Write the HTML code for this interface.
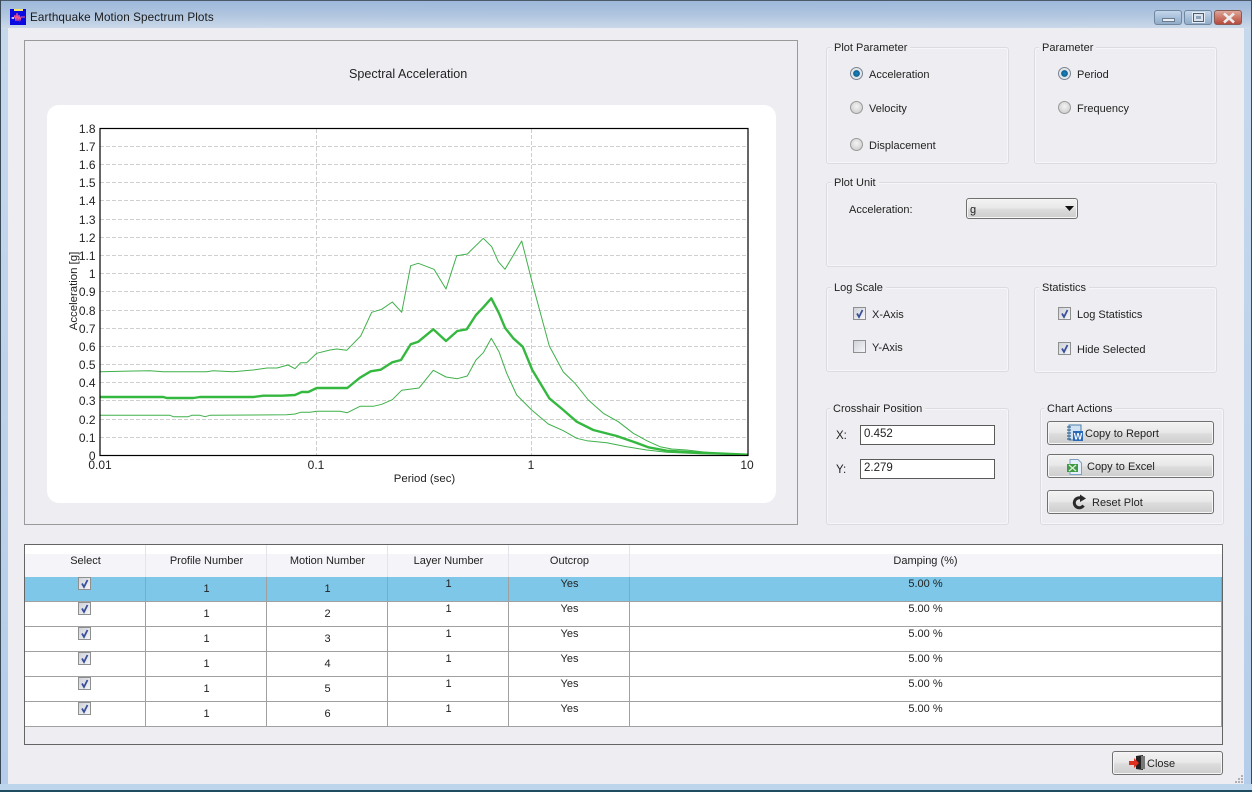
<!DOCTYPE html>
<html><head><meta charset="utf-8"><title>Earthquake Motion Spectrum Plots</title>
<style>
html,body{margin:0;padding:0;background:#b8d0ea}
#w{position:relative;width:1252px;height:792px;overflow:hidden;font-family:"Liberation Sans",sans-serif;font-size:11px;color:#222;background:#bad3ec}
#w div,#w span.a{position:absolute;box-sizing:border-box}
.t{position:absolute;white-space:nowrap;line-height:14px;margin-top:1px}
.g{border:1px solid #dcdce0;border-radius:3px;box-shadow:0 0 0 1px #f6f6f8 inset}
.lg{position:absolute;background:#eeeef2;padding:0 3px 0 3px;line-height:14px;white-space:nowrap;top:-7px;left:4px}
.r{width:13px;height:13px;border-radius:50%;border:1px solid #9a9a9a;background:radial-gradient(circle at 50% 40%,#f4f4f4,#d8d8d8 60%,#c4c4c4)}
.r.on{background:radial-gradient(circle,#1a86bc 0,#0d5f92 40%,#dfe4ea 46%,#e6e6e6 70%,#cfcfcf);border-color:#7a8492}
.c{width:13px;height:13px;border:1px solid #8e8f8f;background:linear-gradient(135deg,#cfd2d9,#f6f6f8);}
.c svg{position:absolute;left:0;top:0}
.b{border:1px solid #707070;border-radius:3px;background:linear-gradient(#f3f3f3 0,#e9e9e9 45%,#dcdcdc 55%,#cdcdcd 100%);box-shadow:inset 0 0 0 1px #f6f6f6}
.tb{background:#fff;border:1px solid #5a5a5a}
.h{position:absolute;left:25px;width:1196px;height:1px;background:#a0a0a0}
.ctr{text-align:center;width:121px}
</style></head><body>
<div id="w">
<!-- title bar -->
<div style="left:0;top:0;width:1252px;height:29px;background:linear-gradient(90deg,#a9c1de 0,#a4bcda 50%,#a8c0dc 100%)"></div>
<div style="left:0;top:0;width:1252px;height:29px;background:linear-gradient(#9ab6da 0,#b4c8e0 55%,#d3dfec 100%);opacity:.85"></div>
<div style="left:0;top:0;width:1252px;height:1px;background:#4a5a68"></div>
<div style="left:0;top:0;width:1px;height:792px;background:#3c4a58"></div>
<div style="left:1251px;top:0;width:1px;height:792px;background:#3c4a58"></div>
<div style="left:1px;top:29px;width:7px;height:755px;background:linear-gradient(#c6d8ec,#b4cdea)"></div>
<div style="left:1244px;top:29px;width:7px;height:755px;background:linear-gradient(#c6d8ec,#b4cdea)"></div>
<div style="left:0;top:784px;width:1252px;height:7px;background:#bcd5ea"></div>
<div style="left:0;top:790px;width:1252px;height:2px;background:#1f4c60"></div>
<!-- client -->
<div style="left:8px;top:28px;width:1236px;height:756px;background:#eeeef2"></div>
<!-- app icon -->
<svg style="position:absolute;left:10px;top:9px" width="16" height="16" viewBox="0 0 16 16"><rect width="16" height="16" fill="#0a0ae0"/><rect x="4" y="0" width="9" height="2" fill="#f4e66a"/><path d="M1 9H4L5 6 6 12 7 4 8 12 9 6 10 11 11 8H15" stroke="#ff5a8a" stroke-width="1" fill="none"/><path d="M2 9H4" stroke="#fff" stroke-width="1.5"/></svg>
<span class="t" style="left:30px;top:10px;font-size:11.7px;color:#1b1b1b;letter-spacing:.1px">Earthquake Motion Spectrum Plots</span>
<!-- window buttons -->
<div style="left:1154px;top:10px;width:28px;height:15px;border:1px solid #6f879f;border-radius:3px;background:linear-gradient(#c4d6ea,#a8c0da 50%,#92acc8)"><div style="left:7px;top:7px;width:13px;height:4px;background:#e8edf3;border:1px solid #6a7c90"></div></div>
<div style="left:1184px;top:10px;width:28px;height:15px;border:1px solid #6f879f;border-radius:3px;background:linear-gradient(#c4d6ea,#a8c0da 50%,#92acc8)"><div style="left:8px;top:2px;width:11px;height:9px;border:1px solid #4c5d70;background:#dbe4ee;box-shadow:0 0 0 1px #e6edf4"><div style="left:2px;top:2px;width:5px;height:3px;background:#8fa4ba"></div></div></div>
<div style="left:1214px;top:10px;width:28px;height:15px;border:1px solid #8a5a54;border-radius:3px;background:linear-gradient(#dca699,#cc7668 50%,#b44a3e)"><svg style="position:absolute;left:6px;top:1px" width="16" height="12" viewBox="0 0 16 12"><path d="M3 1.5 13 10.5M13 1.5 3 10.5" stroke="#ececec" stroke-width="2.6"/></svg></div>

<!-- chart panel -->
<div style="left:24px;top:40px;width:774px;height:485px;border:1px solid #9a9a9a;background:#eeeef2"></div>
<div style="left:47px;top:105px;width:729px;height:398px;background:#fff;border-radius:12px"></div>
<span class="t" style="left:349px;top:66px;font-size:12.6px;color:#222">Spectral Acceleration</span>
<svg style="position:absolute;left:0;top:0" width="800" height="530" viewBox="0 0 800 530" font-family="Liberation Sans, sans-serif" font-size="12" fill="#222">
<g stroke="#cfcfcf" stroke-dasharray="4 2" stroke-width="1" fill="none">
<path d="M100 146.5H748M100 164.5H748M100 182.5H748M100 200.5H748M100 219.5H748M100 237.5H748M100 255.5H748M100 273.5H748M100 291.5H748M100 310.5H748M100 328.5H748M100 346.5H748M100 364.5H748M100 382.5H748M100 400.5H748M100 419.5H748M100 437.5H748"/>
<path d="M316.5 129V455M531.5 129V455"/>
</g>
<g fill="none" stroke="#3fb04a" stroke-width="1" stroke-linejoin="round">
<polyline points="100.3,371.7 150,370.7 163.3,371.7 206.7,371.7 213,370.7 233,371.7 253,370 267,368 277,368 288,365 295,368.7 300.7,362.7 306.7,362.7 316.7,353.3 330,350 336.7,349 346.7,350.3 360.7,336 371.7,312.3 381.7,309.3 392.3,302 401.7,312.3 410.7,265.7 418.3,263.3 434,269.3 446,289 456.7,255.7 467.3,254 483.3,238.3 491.7,246.7 498.3,261.7 505,269.3 521.7,241 533.3,286.7 549.3,346 563.3,372 575,383.3 588.3,400 603.3,413.3 618.3,421.7 633.3,433.3 646.7,440.7 660,446.7 671.7,449 686.7,450 710,452.7 747.7,454.3"/>
<polyline points="100.3,415.3 170,415.3 173.3,416.7 188.3,416.7 191.7,415.3 200,415.3 205,416.7 210,415.3 286.7,414.7 295,414 300.7,412.3 310,412.3 316.7,411.3 340,411.3 347.3,412.7 360,406.3 373.3,406.3 381.7,404.3 392.3,399.7 401.7,390.3 419,388 433.3,370.3 446,377 457.3,378.7 467.3,376 476,360 483.3,352.7 491.3,338.3 499,351.7 506.7,373.3 516.7,395 531.7,410 548.3,424 563.3,430.7 576.7,438.3 586.7,440.7 606.7,442.7 626.7,446.7 646.7,450 666.7,452.3 700,453.7 747.7,454.7"/>
</g>
<polyline fill="none" stroke="#35b83f" stroke-width="2.4" stroke-linejoin="round" points="100.3,397 163.3,397 166.7,398 193.3,398 200,397 253.3,397 263.3,395.7 281.7,395.7 295,395 301.7,392 308.3,392 316.7,388 347.3,388 360,377.7 370.7,371.3 380.7,369.7 392.3,362.3 401,360 410.7,344.3 418.3,341.7 433.3,329.3 446,341 457.3,331 466.7,329.3 476,315 483.3,307.3 491.3,298.3 499,313.3 505,327.7 513.3,338.3 522.7,346.7 532.3,370 549.3,398.3 563.3,410 576.7,421.7 593.3,430 616.7,436 633.3,441.7 648.3,447.3 666.7,450.7 693.3,452.3 747.7,454.7"/>
<rect x="100" y="128.5" width="648" height="327" fill="none" stroke="#000" stroke-width="1.2"/>
<g text-anchor="end">
<text x="95.5" y="133">1.8</text><text x="95.5" y="151">1.7</text><text x="95.5" y="169">1.6</text><text x="95.5" y="187">1.5</text><text x="95.5" y="205">1.4</text><text x="95.5" y="224">1.3</text><text x="95.5" y="242">1.2</text><text x="95.5" y="260">1.1</text><text x="95.5" y="278">1</text><text x="95.5" y="296">0.9</text><text x="95.5" y="315">0.8</text><text x="95.5" y="333">0.7</text><text x="95.5" y="351">0.6</text><text x="95.5" y="369">0.5</text><text x="95.5" y="387">0.4</text><text x="95.5" y="405">0.3</text><text x="95.5" y="424">0.2</text><text x="95.5" y="442">0.1</text><text x="95.5" y="460">0</text>
</g>
<g text-anchor="middle">
<text x="100" y="469">0.01</text><text x="316" y="469">0.1</text><text x="531" y="469">1</text><text x="747" y="469">10</text>
<text x="424.5" y="482" font-size="11.4">Period (sec)</text>
</g>
<text transform="translate(77,291) rotate(-90)" text-anchor="middle" font-size="11.4">Acceleration [g]</text>
</svg>

<!-- Plot Parameter -->
<div class="g" style="left:826px;top:47px;width:183px;height:117px"><span class="lg">Plot Parameter</span></div>
<div class="r on" style="left:850px;top:67px"></div><span class="t" style="left:869px;top:67px">Acceleration</span>
<div class="r" style="left:850px;top:101px"></div><span class="t" style="left:869px;top:101px">Velocity</span>
<div class="r" style="left:850px;top:138px"></div><span class="t" style="left:869px;top:138px">Displacement</span>
<!-- Parameter -->
<div class="g" style="left:1034px;top:47px;width:183px;height:117px"><span class="lg">Parameter</span></div>
<div class="r on" style="left:1058px;top:67px"></div><span class="t" style="left:1077px;top:67px">Period</span>
<div class="r" style="left:1058px;top:101px"></div><span class="t" style="left:1077px;top:101px">Frequency</span>
<!-- Plot Unit -->
<div class="g" style="left:826px;top:182px;width:391px;height:85px"><span class="lg">Plot Unit</span></div>
<span class="t" style="left:849px;top:202px">Acceleration:</span>
<div class="b" style="left:966px;top:198px;width:112px;height:21px"></div>
<span class="t" style="left:970px;top:202px">g</span>
<svg style="position:absolute;left:1065px;top:206px" width="10" height="6"><path d="M0 0H9L4.5 5Z" fill="#111"/></svg>
<!-- Log Scale -->
<div class="g" style="left:826px;top:287px;width:183px;height:85px"><span class="lg">Log Scale</span></div>
<div class="c" style="left:853px;top:307px"><svg width="11" height="11"><path d="M3 5.5 5 9 8.5 2" stroke="#3a4f9a" stroke-width="1.8" fill="none"/></svg></div><span class="t" style="left:872px;top:307px">X-Axis</span>
<div class="c" style="left:853px;top:340px"></div><span class="t" style="left:872px;top:340px">Y-Axis</span>
<!-- Statistics -->
<div class="g" style="left:1034px;top:287px;width:183px;height:86px"><span class="lg">Statistics</span></div>
<div class="c" style="left:1058px;top:307px"><svg width="11" height="11"><path d="M3 5.5 5 9 8.5 2" stroke="#3a4f9a" stroke-width="1.8" fill="none"/></svg></div><span class="t" style="left:1077px;top:307px">Log Statistics</span>
<div class="c" style="left:1058px;top:342px"><svg width="11" height="11"><path d="M3 5.5 5 9 8.5 2" stroke="#3a4f9a" stroke-width="1.8" fill="none"/></svg></div><span class="t" style="left:1077px;top:342px">Hide Selected</span>
<!-- Crosshair -->
<div class="g" style="left:826px;top:408px;width:183px;height:117px"><span class="lg" style="left:3px">Crosshair Position</span></div>
<span class="t" style="left:836px;top:428px;font-size:11.5px">X:</span>
<div class="tb" style="left:860px;top:425px;width:135px;height:20px"></div><span class="t" style="left:864px;top:426px;font-size:11.5px">0.452</span>
<span class="t" style="left:836px;top:462px;font-size:11.5px">Y:</span>
<div class="tb" style="left:860px;top:459px;width:135px;height:20px"></div><span class="t" style="left:864px;top:460px;font-size:11.5px">2.279</span>
<!-- Chart Actions -->
<div class="g" style="left:1040px;top:408px;width:184px;height:117px"><span class="lg" style="left:3px">Chart Actions</span></div>
<div class="b" style="left:1047px;top:421px;width:167px;height:24px"></div>
<svg style="position:absolute;left:1066px;top:424px" width="18" height="18" viewBox="0 0 18 18"><rect x="3" y="1" width="12" height="15" fill="#cfe2f3" stroke="#4b7ea8"/><path d="M1 3H5M1 6H5M1 9H5M1 12H5M1 15H5" stroke="#3a6a94" stroke-width="1.2"/><rect x="7" y="7" width="10" height="10" fill="#2a6ab8"/><text x="12" y="15.5" font-size="9" font-weight="bold" fill="#fff" text-anchor="middle" font-family="Liberation Sans">W</text></svg>
<span class="t" style="left:1085px;top:426px">Copy to Report</span>
<div class="b" style="left:1047px;top:454px;width:167px;height:24px"></div>
<svg style="position:absolute;left:1067px;top:459px" width="16" height="16" viewBox="0 0 16 16"><path d="M3 .5H11L14.5 4V15.5H3Z" fill="#e6f0fa" stroke="#7c9fc4"/><path d="M0 5H11V13H0Z" fill="#3f9a44"/><path d="M2 6 9 12M9 6 2 12" stroke="#d8ecd8" stroke-width="1.4"/></svg>
<span class="t" style="left:1087px;top:459px">Copy to Excel</span>
<div class="b" style="left:1047px;top:490px;width:167px;height:24px"></div>
<svg style="position:absolute;left:1072px;top:494px" width="15" height="16" viewBox="0 0 15 16"><path d="M11.5 11.5A5 5 0 1 1 9.5 4.3" stroke="#2a2a2a" stroke-width="3" fill="none"/><path d="M8 0.5 14 4.5 8 8Z" fill="#2a2a2a"/></svg>
<span class="t" style="left:1092px;top:495px">Reset Plot</span>

<!-- Grid -->
<div style="left:24px;top:544px;width:1199px;height:201px;border:1px solid #646464;background:#eeeef2"></div>
<div style="left:25px;top:545px;width:1197px;height:9px;background:#fff"></div>
<div style="left:25px;top:554px;width:1197px;height:23px;background:#f4f4f9"></div>
<div style="left:25px;top:577px;width:1197px;height:150px;background:#fff"></div>
<div style="left:25px;top:577px;width:1197px;height:24px;background:#7fc7e8"></div>
<div style="left:1221px;top:577px;width:1px;height:150px;background:#a0a0a0"></div>
<div style="left:145px;top:545px;width:1px;height:32px;background:#e4e4ea"></div><div style="left:266px;top:545px;width:1px;height:32px;background:#e4e4ea"></div><div style="left:387px;top:545px;width:1px;height:32px;background:#e4e4ea"></div><div style="left:508px;top:545px;width:1px;height:32px;background:#e4e4ea"></div><div style="left:629px;top:545px;width:1px;height:32px;background:#e4e4ea"></div>
<div style="left:145px;top:577px;width:1px;height:150px;background:#a0a0a0"></div><div style="left:266px;top:577px;width:1px;height:150px;background:#a0a0a0"></div><div style="left:387px;top:577px;width:1px;height:150px;background:#a0a0a0"></div><div style="left:508px;top:577px;width:1px;height:150px;background:#a0a0a0"></div><div style="left:629px;top:577px;width:1px;height:150px;background:#a0a0a0"></div>
<div class="h" style="top:601px"></div><div class="h" style="top:626px"></div><div class="h" style="top:651px"></div><div class="h" style="top:676px"></div><div class="h" style="top:701px"></div><div class="h" style="top:726px"></div>
<span class="t ctr" style="left:25px;top:553px">Select</span><span class="t ctr" style="left:146px;top:553px">Profile Number</span><span class="t ctr" style="left:267px;top:553px">Motion Number</span><span class="t ctr" style="left:388px;top:553px">Layer Number</span><span class="t ctr" style="left:509px;top:553px">Outcrop</span><span class="t" style="left:630px;top:553px;width:591px;text-align:center">Damping (%)</span>

<div class="c" style="left:78px;top:577px"><svg width="11" height="11"><path d="M3 5.5 5 9 8.5 2" stroke="#3a4f9a" stroke-width="1.8" fill="none"/></svg></div>
<span class="t ctr" style="left:146px;top:581px">1</span><span class="t ctr" style="left:267px;top:581px">1</span><span class="t ctr" style="left:388px;top:576px">1</span><span class="t ctr" style="left:509px;top:576px">Yes</span><span class="t" style="left:630px;top:576px;width:591px;text-align:center">5.00 %</span>
<div class="c" style="left:78px;top:602px"><svg width="11" height="11"><path d="M3 5.5 5 9 8.5 2" stroke="#3a4f9a" stroke-width="1.8" fill="none"/></svg></div>
<span class="t ctr" style="left:146px;top:606px">1</span><span class="t ctr" style="left:267px;top:606px">2</span><span class="t ctr" style="left:388px;top:601px">1</span><span class="t ctr" style="left:509px;top:601px">Yes</span><span class="t" style="left:630px;top:601px;width:591px;text-align:center">5.00 %</span>
<div class="c" style="left:78px;top:627px"><svg width="11" height="11"><path d="M3 5.5 5 9 8.5 2" stroke="#3a4f9a" stroke-width="1.8" fill="none"/></svg></div>
<span class="t ctr" style="left:146px;top:631px">1</span><span class="t ctr" style="left:267px;top:631px">3</span><span class="t ctr" style="left:388px;top:626px">1</span><span class="t ctr" style="left:509px;top:626px">Yes</span><span class="t" style="left:630px;top:626px;width:591px;text-align:center">5.00 %</span>
<div class="c" style="left:78px;top:652px"><svg width="11" height="11"><path d="M3 5.5 5 9 8.5 2" stroke="#3a4f9a" stroke-width="1.8" fill="none"/></svg></div>
<span class="t ctr" style="left:146px;top:656px">1</span><span class="t ctr" style="left:267px;top:656px">4</span><span class="t ctr" style="left:388px;top:651px">1</span><span class="t ctr" style="left:509px;top:651px">Yes</span><span class="t" style="left:630px;top:651px;width:591px;text-align:center">5.00 %</span>
<div class="c" style="left:78px;top:677px"><svg width="11" height="11"><path d="M3 5.5 5 9 8.5 2" stroke="#3a4f9a" stroke-width="1.8" fill="none"/></svg></div>
<span class="t ctr" style="left:146px;top:681px">1</span><span class="t ctr" style="left:267px;top:681px">5</span><span class="t ctr" style="left:388px;top:676px">1</span><span class="t ctr" style="left:509px;top:676px">Yes</span><span class="t" style="left:630px;top:676px;width:591px;text-align:center">5.00 %</span>
<div class="c" style="left:78px;top:702px"><svg width="11" height="11"><path d="M3 5.5 5 9 8.5 2" stroke="#3a4f9a" stroke-width="1.8" fill="none"/></svg></div>
<span class="t ctr" style="left:146px;top:706px">1</span><span class="t ctr" style="left:267px;top:706px">6</span><span class="t ctr" style="left:388px;top:701px">1</span><span class="t ctr" style="left:509px;top:701px">Yes</span><span class="t" style="left:630px;top:701px;width:591px;text-align:center">5.00 %</span>

<!-- Close -->
<div class="b" style="left:1112px;top:751px;width:111px;height:24px"></div>
<svg style="position:absolute;left:1128px;top:755px" width="18" height="16" viewBox="0 0 18 16"><path d="M8 1 15 0V15L8 14Z" fill="#222"/><path d="M13 1H17V14H13Z" fill="#777"/><path d="M1 6H6V3L11 8 6 13V10H1Z" fill="#e03020"/></svg>
<span class="t" style="left:1147px;top:756px">Close</span>
<svg style="position:absolute;left:1235px;top:775px" width="9" height="9"><g fill="#b0b0b4"><rect x="6" y="0" width="2" height="2"/><rect x="3" y="3" width="2" height="2"/><rect x="6" y="3" width="2" height="2"/><rect x="0" y="6" width="2" height="2"/><rect x="3" y="6" width="2" height="2"/><rect x="6" y="6" width="2" height="2"/></g></svg>
</div>
</body></html>
